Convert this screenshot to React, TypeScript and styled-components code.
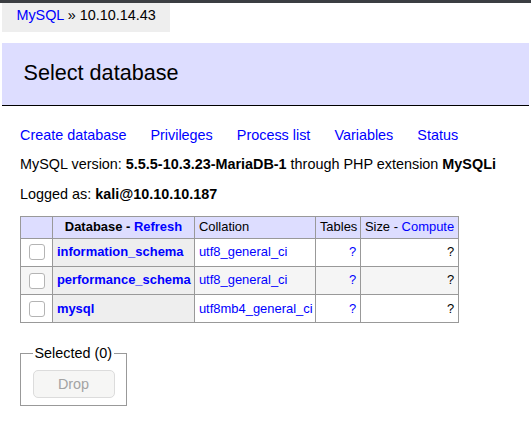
import React from "react";
import styled, { createGlobalStyle } from "styled-components";

const GlobalStyle = createGlobalStyle`
  html, body { margin: 0; padding: 0; background: #fff; }
  body {
    color: #000;
    font: 14.4px/1.25 "Liberation Sans", Arial, Helvetica, sans-serif;
  }
`;

const TopStrip = styled.div`
  height: 3px;
  background: #3b3e42;
`;

const Breadcrumb = styled.div`
  margin-left: 2px;
  width: fit-content;
  height: 29px;
  line-height: 1.8em;
  padding: 0 1em;
  background: #eee;
  white-space: nowrap;
`;

const Link = styled.a<{ $bold?: boolean }>`
  color: blue;
  text-decoration: none;
  font-weight: ${(p) => (p.$bold ? "bold" : "normal")};
  cursor: pointer;
`;

const Content = styled.div`
  margin-top: 11px;
  padding: 0 2px 20px 20px;
`;

const Title = styled.h2`
  font-size: 21.6px;
  line-height: 1.25;
  margin: 0 0 20px -18px;
  padding: 0.8em 1em;
  border-bottom: 1px solid #000;
  color: #000;
  font-weight: normal;
  background: #ddf;
`;

const Para = styled.p`
  margin: 0.8em 20px 0 0;
`;

const NavLink = styled(Link)`
  margin-right: 20px;
  white-space: nowrap;
`;

const Table = styled.table`
  margin: 1em 20px 0 0;
  border: 0;
  border-top: 1px solid #999;
  border-left: 1px solid #999;
  border-spacing: 0;
  table-layout: fixed;
  width: 439px;
  font-size: 12.96px;
  line-height: 1.25;
`;

const Col = styled.col<{ $w: number }>`
  width: ${(p) => p.$w}px;
`;

const HeadTh = styled.th`
  border-right: 1px solid #999;
  border-bottom: 1px solid #999;
  padding: 0.2em 0.5em;
  background: #ddf;
  text-align: center;
  font-weight: bold;
  white-space: nowrap;
`;

const HeadTd = styled.td`
  border-right: 1px solid #999;
  border-bottom: 1px solid #999;
  padding: 0.2em 0.3em;
  background: #ddf;
  white-space: nowrap;
`;

const Row = styled.tr<{ $alt?: boolean }>`
  background: ${(p) => (p.$alt ? "#f5f5f5" : "transparent")};
`;

const Cell = styled.td<{ $right?: boolean }>`
  border-right: 1px solid #999;
  border-bottom: 1px solid #999;
  padding: 0.2em 0.3em;
  text-align: ${(p) => (p.$right ? "right" : "left")};
  white-space: nowrap;
`;

const NameCell = styled.th`
  border-right: 1px solid #999;
  border-bottom: 1px solid #999;
  padding: 0.2em 0.3em;
  background: #eee;
  text-align: left;
  font-weight: bold;
  white-space: nowrap;
`;

const CheckBox = styled.span`
  display: block;
  box-sizing: border-box;
  width: 16px;
  height: 16px;
  margin: 3px 3px 3px 4px;
  border: 1px solid #b4b4b4;
  border-radius: 3px;
  background: #fff;
`;

const Fieldset = styled.fieldset`
  display: inline-block;
  vertical-align: top;
  padding: 0.5em 0.8em;
  margin: 21px 0.5em 0 0;
  border: 1px solid #999;
  min-inline-size: auto;
`;

const Legend = styled.legend`
  padding: 0 2px;
`;

const DropButton = styled.button`
  display: block;
  box-sizing: border-box;
  width: 82px;
  height: 28px;
  padding: 0;
  font: 14.4px "Liberation Sans", Arial, sans-serif;
  color: #a3a3a3;
  background: #f6f6f5;
  border: 1px solid #dcdcdc;
  border-radius: 5px;
`;

const databases = [
  { name: "information_schema", collation: "utf8_general_ci" },
  { name: "performance_schema", collation: "utf8_general_ci" },
  { name: "mysql", collation: "utf8mb4_general_ci" },
];

export default function App() {
  return (
    <>
      <GlobalStyle />
      <TopStrip />
      <Breadcrumb>
        <Link>MySQL</Link> » 10.10.14.43
      </Breadcrumb>
      <Content>
        <Title>Select database</Title>
        <Para>
          <NavLink>Create database</NavLink> <NavLink>Privileges</NavLink>{" "}
          <NavLink>Process list</NavLink> <NavLink>Variables</NavLink>{" "}
          <NavLink>Status</NavLink>
        </Para>
        <Para>
          MySQL version: <b>5.5.5-10.3.23-MariaDB-1</b> through PHP extension{" "}
          <b>MySQLi</b>
        </Para>
        <Para>
          Logged as: <b>kali@10.10.10.187</b>
        </Para>
        <Table>
          <colgroup>
            <Col $w={32} />
            <Col $w={142} />
            <Col $w={121} />
            <Col $w={45} />
            <Col $w={98} />
          </colgroup>
          <thead>
            <tr>
              <HeadTd></HeadTd>
              <HeadTh>
                Database - <Link $bold>Refresh</Link>
              </HeadTh>
              <HeadTd>Collation</HeadTd>
              <HeadTd>Tables</HeadTd>
              <HeadTd>
                Size - <Link>Compute</Link>
              </HeadTd>
            </tr>
          </thead>
          <tbody>
            {databases.map((db, i) => (
              <Row key={db.name} $alt={i % 2 === 1}>
                <Cell>
                  <CheckBox />
                </Cell>
                <NameCell>
                  <Link $bold>{db.name}</Link>
                </NameCell>
                <Cell>
                  <Link>{db.collation}</Link>
                </Cell>
                <Cell $right>
                  <Link>?</Link>
                </Cell>
                <Cell $right>?</Cell>
              </Row>
            ))}
          </tbody>
        </Table>
        <Fieldset>
          <Legend>Selected (0)</Legend>
          <DropButton disabled>Drop</DropButton>
        </Fieldset>
      </Content>
    </>
  );
}
